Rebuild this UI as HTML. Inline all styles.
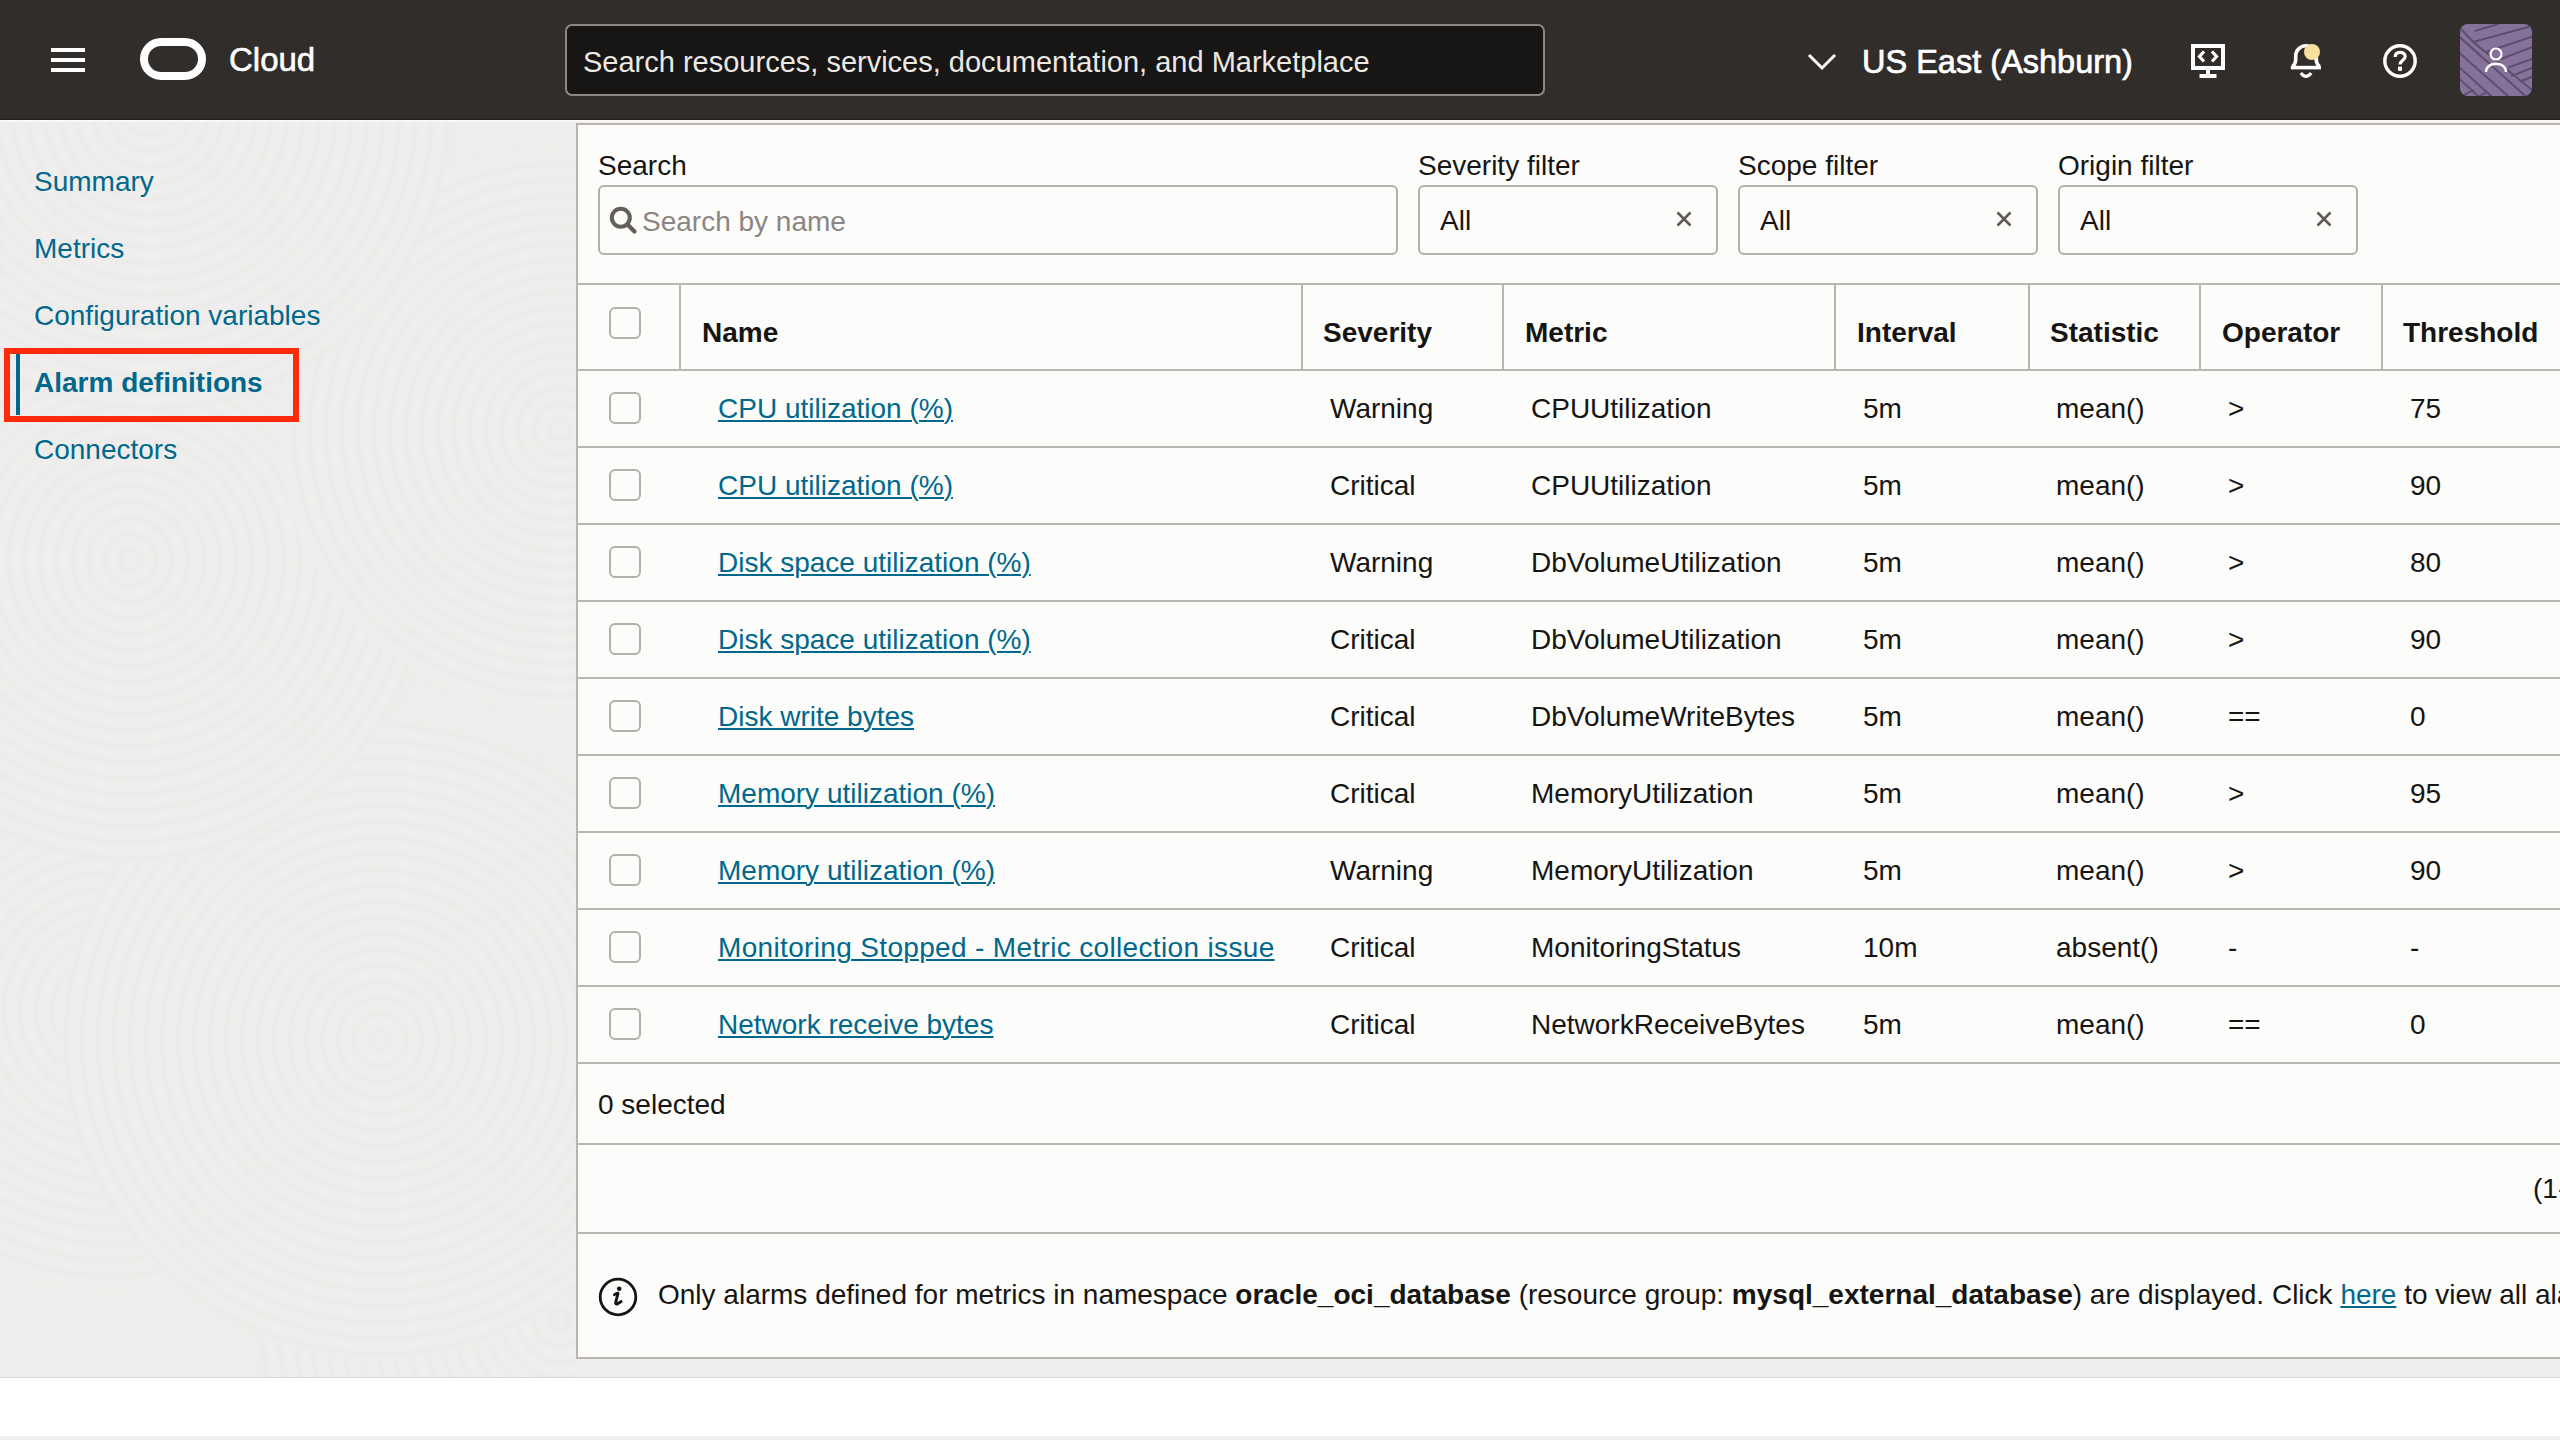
<!DOCTYPE html>
<html><head><meta charset="utf-8">
<style>
*{margin:0;padding:0;box-sizing:border-box}
html,body{width:2560px;height:1440px;overflow:hidden;background:#fff;font-family:"Liberation Sans",sans-serif;}
.a{position:absolute;white-space:nowrap;line-height:1}
#hdr{position:absolute;left:0;top:0;width:2560px;height:120px;background:#312D2A;border-bottom:1px solid #221E1B}
#wl{position:absolute;left:0;top:120px;width:2560px;height:2px;background:#F9F8F7}
#side{position:absolute;left:0;top:122px;width:2560px;height:1255px;background:#EEEDEB}
#sideline{position:absolute;left:0;top:1377px;width:2560px;height:1px;background:#D6D3CF}
#botstrip{position:absolute;left:0;top:1436px;width:2560px;height:4px;background:#F1F0EE}
.nav{font-size:28px;color:#00688C}
#panel{position:absolute;left:576px;top:123px;width:2000px;height:1236px;background:#FCFCFA;border:2px solid #B9B4AF}
.lbl{font-size:28px;color:#161513}
.inp{position:absolute;border:2px solid #B5AFAA;border-radius:6px;background:#FCFCFA}
.hl{position:absolute;left:578px;width:1990px;height:2px;background:#BAB5B0}
.vl{position:absolute;top:285px;width:2px;height:84px;background:#BAB5B0}
.cb{position:absolute;left:609px;width:32px;height:32px;border:2px solid #B5AFAA;border-radius:6px;background:#FCFCFA}
.th{font-size:28px;font-weight:bold;color:#161513}
.td{font-size:28px;color:#161513}
.lk{font-size:28px;color:#00688C;text-decoration:underline;text-decoration-thickness:2px;text-underline-offset:2px}
</style></head><body>
<div id="hdr"></div>
<div id="wl"></div>
<div id="side"></div>
<div id="sideline"></div>
<div id="botstrip"></div>
<svg class="a" style="left:0;top:122px" width="576" height="1255" viewBox="0 122 576 1255"><defs><filter id="bl" x="-5%" y="-5%" width="110%" height="110%"><feGaussianBlur stdDeviation="1.6"/></filter></defs><g filter="url(#bl)"><circle cx="560" cy="1320" r="300" fill="#EFEEEC"/><g fill="none" stroke="#ECEBE9" stroke-width="6"><circle cx="560" cy="1320" r="10"/><circle cx="560" cy="1320" r="26"/><circle cx="560" cy="1320" r="42"/><circle cx="560" cy="1320" r="58"/><circle cx="560" cy="1320" r="74"/><circle cx="560" cy="1320" r="90"/><circle cx="560" cy="1320" r="106"/><circle cx="560" cy="1320" r="122"/><circle cx="560" cy="1320" r="138"/><circle cx="560" cy="1320" r="154"/><circle cx="560" cy="1320" r="170"/><circle cx="560" cy="1320" r="186"/><circle cx="560" cy="1320" r="202"/><circle cx="560" cy="1320" r="218"/><circle cx="560" cy="1320" r="234"/><circle cx="560" cy="1320" r="250"/><circle cx="560" cy="1320" r="266"/><circle cx="560" cy="1320" r="282"/><circle cx="560" cy="1320" r="298"/></g><circle cx="110" cy="1010" r="280" fill="#EFEEEC"/><g fill="none" stroke="#ECEBE9" stroke-width="6"><circle cx="110" cy="1010" r="10"/><circle cx="110" cy="1010" r="26"/><circle cx="110" cy="1010" r="42"/><circle cx="110" cy="1010" r="58"/><circle cx="110" cy="1010" r="74"/><circle cx="110" cy="1010" r="90"/><circle cx="110" cy="1010" r="106"/><circle cx="110" cy="1010" r="122"/><circle cx="110" cy="1010" r="138"/><circle cx="110" cy="1010" r="154"/><circle cx="110" cy="1010" r="170"/><circle cx="110" cy="1010" r="186"/><circle cx="110" cy="1010" r="202"/><circle cx="110" cy="1010" r="218"/><circle cx="110" cy="1010" r="234"/><circle cx="110" cy="1010" r="250"/><circle cx="110" cy="1010" r="266"/></g><circle cx="380" cy="1040" r="320" fill="#EFEEEC"/><g fill="none" stroke="#ECEBE9" stroke-width="6"><circle cx="380" cy="1040" r="10"/><circle cx="380" cy="1040" r="26"/><circle cx="380" cy="1040" r="42"/><circle cx="380" cy="1040" r="58"/><circle cx="380" cy="1040" r="74"/><circle cx="380" cy="1040" r="90"/><circle cx="380" cy="1040" r="106"/><circle cx="380" cy="1040" r="122"/><circle cx="380" cy="1040" r="138"/><circle cx="380" cy="1040" r="154"/><circle cx="380" cy="1040" r="170"/><circle cx="380" cy="1040" r="186"/><circle cx="380" cy="1040" r="202"/><circle cx="380" cy="1040" r="218"/><circle cx="380" cy="1040" r="234"/><circle cx="380" cy="1040" r="250"/><circle cx="380" cy="1040" r="266"/><circle cx="380" cy="1040" r="282"/><circle cx="380" cy="1040" r="298"/><circle cx="380" cy="1040" r="314"/></g><circle cx="130" cy="560" r="300" fill="#EFEEEC"/><g fill="none" stroke="#ECEBE9" stroke-width="6"><circle cx="130" cy="560" r="10"/><circle cx="130" cy="560" r="26"/><circle cx="130" cy="560" r="42"/><circle cx="130" cy="560" r="58"/><circle cx="130" cy="560" r="74"/><circle cx="130" cy="560" r="90"/><circle cx="130" cy="560" r="106"/><circle cx="130" cy="560" r="122"/><circle cx="130" cy="560" r="138"/><circle cx="130" cy="560" r="154"/><circle cx="130" cy="560" r="170"/><circle cx="130" cy="560" r="186"/><circle cx="130" cy="560" r="202"/><circle cx="130" cy="560" r="218"/><circle cx="130" cy="560" r="234"/><circle cx="130" cy="560" r="250"/><circle cx="130" cy="560" r="266"/><circle cx="130" cy="560" r="282"/><circle cx="130" cy="560" r="298"/></g><circle cx="560" cy="430" r="280" fill="#EFEEEC"/><g fill="none" stroke="#ECEBE9" stroke-width="6"><circle cx="560" cy="430" r="10"/><circle cx="560" cy="430" r="26"/><circle cx="560" cy="430" r="42"/><circle cx="560" cy="430" r="58"/><circle cx="560" cy="430" r="74"/><circle cx="560" cy="430" r="90"/><circle cx="560" cy="430" r="106"/><circle cx="560" cy="430" r="122"/><circle cx="560" cy="430" r="138"/><circle cx="560" cy="430" r="154"/><circle cx="560" cy="430" r="170"/><circle cx="560" cy="430" r="186"/><circle cx="560" cy="430" r="202"/><circle cx="560" cy="430" r="218"/><circle cx="560" cy="430" r="234"/><circle cx="560" cy="430" r="250"/><circle cx="560" cy="430" r="266"/></g><circle cx="150" cy="110" r="300" fill="#EFEEEC"/><g fill="none" stroke="#ECEBE9" stroke-width="6"><circle cx="150" cy="110" r="10"/><circle cx="150" cy="110" r="26"/><circle cx="150" cy="110" r="42"/><circle cx="150" cy="110" r="58"/><circle cx="150" cy="110" r="74"/><circle cx="150" cy="110" r="90"/><circle cx="150" cy="110" r="106"/><circle cx="150" cy="110" r="122"/><circle cx="150" cy="110" r="138"/><circle cx="150" cy="110" r="154"/><circle cx="150" cy="110" r="170"/><circle cx="150" cy="110" r="186"/><circle cx="150" cy="110" r="202"/><circle cx="150" cy="110" r="218"/><circle cx="150" cy="110" r="234"/><circle cx="150" cy="110" r="250"/><circle cx="150" cy="110" r="266"/><circle cx="150" cy="110" r="282"/><circle cx="150" cy="110" r="298"/></g></g></svg>

<!-- header -->
<div class="a" style="left:51px;top:48px;width:34px;height:4px;background:#fff"></div>
<div class="a" style="left:51px;top:58px;width:34px;height:4px;background:#fff"></div>
<div class="a" style="left:51px;top:68px;width:34px;height:4px;background:#fff"></div>
<div class="a" style="left:140px;top:38px;width:66px;height:42px;border:8px solid #fff;border-radius:21px"></div>
<div class="a" style="left:229px;top:43px;font-size:33px;color:#fff;-webkit-text-stroke:0.6px #fff">Cloud</div>
<div class="a" style="left:565px;top:24px;width:980px;height:72px;background:#171614;border:2px solid #8C8884;border-radius:7px"></div>
<div class="a" style="left:583px;top:47.5px;font-size:29px;color:#ECE9E4">Search resources, services, documentation, and Marketplace</div>
<svg class="a" style="left:1806px;top:52px" width="32" height="20" viewBox="0 0 32 20"><polyline points="3,3 16,16 29,3" fill="none" stroke="#fff" stroke-width="3"/></svg>
<div class="a" style="left:1862px;top:46px;font-size:32.5px;color:#fff;-webkit-text-stroke:0.7px #fff">US East (Ashburn)</div>
<!-- dev tools icon -->
<svg class="a" style="left:2190px;top:43px" width="38" height="36" viewBox="0 0 38 36">
 <rect x="3" y="3" width="30" height="22" fill="none" stroke="#fff" stroke-width="4"/>
 <path d="M14 8.5L9.5 13.5L14 18.5M22 8.5L26.5 13.5L22 18.5" fill="none" stroke="#fff" stroke-width="3.2"/>
 <rect x="16" y="26" width="4" height="5" fill="#fff"/>
 <rect x="9.5" y="31" width="17" height="4" fill="#fff"/>
</svg>
<!-- bell -->
<svg class="a" style="left:2288px;top:40px" width="40" height="40" viewBox="0 0 40 40">
 <path d="M4.6 26.4 C7.7 23.5 7.7 22 7.7 20 L7.7 16 A10.3 10.3 0 0 1 28.3 16 L28.3 20 C28.3 22 28.3 23.5 31.4 26.4" fill="none" stroke="#fff" stroke-width="3.6"/><rect x="2.8" y="25.8" width="30.2" height="3.6" fill="#fff"/>
 <path d="M12.8 33 Q18 39.6 23.2 33" fill="none" stroke="#fff" stroke-width="3.2"/>
 <circle cx="24" cy="12" r="8" fill="#F7E09E"/>
</svg>
<!-- help -->
<svg class="a" style="left:2381px;top:42px" width="38" height="38" viewBox="0 0 38 38">
 <circle cx="19" cy="19" r="15.2" fill="none" stroke="#fff" stroke-width="3.4"/>
 <path d="M14.2 15 C14.2 11.6 16.4 10.4 19.2 10.4 C22 10.4 24.2 12 24.2 14.6 C24.2 18 19 18.4 19 22.5" fill="none" stroke="#fff" stroke-width="3.2"/>
 <rect x="17" y="24.6" width="4" height="4.2" fill="#fff"/>
</svg>
<!-- avatar -->
<svg class="a" style="left:2460px;top:24px" width="72" height="72" viewBox="0 0 72 72">
 <defs><clipPath id="avc"><rect x="0" y="0" width="72" height="72" rx="8"/></clipPath></defs>
 <g clip-path="url(#avc)">
  <rect x="0" y="0" width="72" height="72" fill="#86719B"/>
  <g stroke="#5E4E6E" stroke-width="2" fill="none" stroke-linecap="round">
   <path d="M0 4 L13.2 18 L72 66 M0 13.3 L72 78 M0 29.4 L48 72 M0 43.9 L31 72 M0 55.5 L18 72"/>
   <path d="M15.4 6.9 L38.2 0 M13.2 18 L72 2 M27.1 27.8 L72 12.8 M41 35 L72 23.3 M48.8 43.3 L72 35 M52.1 51.7 L72 43.9 M61 57.2 L72 52.8 M4 71 L13 66 M20 72 L25 69"/>
  </g>
  <circle cx="36" cy="30" r="5.5" fill="none" stroke="#fff" stroke-width="2.2"/>
  <path d="M26 48 C26 37 46 37 46 48" fill="none" stroke="#fff" stroke-width="2.4"/>
 </g>
</svg>

<!-- sidebar nav -->
<div class="a nav" style="left:34px;top:168px">Summary</div>
<div class="a nav" style="left:34px;top:235px">Metrics</div>
<div class="a nav" style="left:34px;top:302px">Configuration variables</div>
<div class="a" style="left:16px;top:353px;width:4px;height:62px;background:#00688C"></div>
<div class="a nav" style="left:34px;top:369px;font-weight:bold">Alarm definitions</div>
<div class="a nav" style="left:34px;top:436px">Connectors</div>
<div class="a" style="left:4px;top:348px;width:295px;height:74px;border:6px solid #FF2A0A"></div>

<!-- panel -->
<div id="panel"></div>
<div class="a lbl" style="left:598px;top:152px">Search</div>
<div class="inp" style="left:598px;top:185px;width:800px;height:70px"></div>
<svg class="a" style="left:608px;top:205px" width="32" height="32" viewBox="0 0 32 32">
 <circle cx="12.8" cy="12.8" r="9" fill="none" stroke="#645F5A" stroke-width="4"/>
 <path d="M19.5 19.5 L26.5 26.5" stroke="#645F5A" stroke-width="4.2" stroke-linecap="round"/>
</svg>
<div class="a" style="left:642px;top:208px;font-size:28px;color:#8B8681">Search by name</div>

<div class="a lbl" style="left:1418px;top:152px">Severity filter</div>
<div class="inp" style="left:1418px;top:185px;width:300px;height:70px"></div>
<div class="a td" style="left:1440px;top:207px">All</div>
<svg class="a" style="left:1676px;top:211px" width="16" height="16" viewBox="0 0 16 16"><path d="M1.5 1.5L14.5 14.5M14.5 1.5L1.5 14.5" stroke="#5F5A55" stroke-width="2.6"/></svg>
<div class="a lbl" style="left:1738px;top:152px">Scope filter</div>
<div class="inp" style="left:1738px;top:185px;width:300px;height:70px"></div>
<div class="a td" style="left:1760px;top:207px">All</div>
<svg class="a" style="left:1996px;top:211px" width="16" height="16" viewBox="0 0 16 16"><path d="M1.5 1.5L14.5 14.5M14.5 1.5L1.5 14.5" stroke="#5F5A55" stroke-width="2.6"/></svg>
<div class="a lbl" style="left:2058px;top:152px">Origin filter</div>
<div class="inp" style="left:2058px;top:185px;width:300px;height:70px"></div>
<div class="a td" style="left:2080px;top:207px">All</div>
<svg class="a" style="left:2316px;top:211px" width="16" height="16" viewBox="0 0 16 16"><path d="M1.5 1.5L14.5 14.5M14.5 1.5L1.5 14.5" stroke="#5F5A55" stroke-width="2.6"/></svg>

<!-- table -->
<div class="hl" style="top:283px"></div>
<div class="hl" style="top:369px"></div>
<div class="vl" style="left:679px"></div>
<div class="vl" style="left:1301px"></div>
<div class="vl" style="left:1502px"></div>
<div class="vl" style="left:1834px"></div>
<div class="vl" style="left:2028px"></div>
<div class="vl" style="left:2199px"></div>
<div class="vl" style="left:2381px"></div>

<div class="cb" style="top:307px"></div>
<div class="a th" style="left:702px;top:319px">Name</div>
<div class="a th" style="left:1323px;top:319px">Severity</div>
<div class="a th" style="left:1525px;top:319px">Metric</div>
<div class="a th" style="left:1857px;top:319px">Interval</div>
<div class="a th" style="left:2050px;top:319px">Statistic</div>
<div class="a th" style="left:2222px;top:319px">Operator</div>
<div class="a th" style="left:2403px;top:319px">Threshold</div>

<div class="cb" style="top:392px"></div>
<div class="a lk" style="left:718px;top:395px">CPU utilization (%)</div>
<div class="a td" style="left:1330px;top:395px">Warning</div>
<div class="a td" style="left:1531px;top:395px">CPUUtilization</div>
<div class="a td" style="left:1863px;top:395px">5m</div>
<div class="a td" style="left:2056px;top:395px">mean()</div>
<div class="a td" style="left:2228px;top:395px">&gt;</div>
<div class="a td" style="left:2410px;top:395px">75</div>
<div class="hl" style="top:446px"></div>
<div class="cb" style="top:469px"></div>
<div class="a lk" style="left:718px;top:472px">CPU utilization (%)</div>
<div class="a td" style="left:1330px;top:472px">Critical</div>
<div class="a td" style="left:1531px;top:472px">CPUUtilization</div>
<div class="a td" style="left:1863px;top:472px">5m</div>
<div class="a td" style="left:2056px;top:472px">mean()</div>
<div class="a td" style="left:2228px;top:472px">&gt;</div>
<div class="a td" style="left:2410px;top:472px">90</div>
<div class="hl" style="top:523px"></div>
<div class="cb" style="top:546px"></div>
<div class="a lk" style="left:718px;top:549px">Disk space utilization (%)</div>
<div class="a td" style="left:1330px;top:549px">Warning</div>
<div class="a td" style="left:1531px;top:549px">DbVolumeUtilization</div>
<div class="a td" style="left:1863px;top:549px">5m</div>
<div class="a td" style="left:2056px;top:549px">mean()</div>
<div class="a td" style="left:2228px;top:549px">&gt;</div>
<div class="a td" style="left:2410px;top:549px">80</div>
<div class="hl" style="top:600px"></div>
<div class="cb" style="top:623px"></div>
<div class="a lk" style="left:718px;top:626px">Disk space utilization (%)</div>
<div class="a td" style="left:1330px;top:626px">Critical</div>
<div class="a td" style="left:1531px;top:626px">DbVolumeUtilization</div>
<div class="a td" style="left:1863px;top:626px">5m</div>
<div class="a td" style="left:2056px;top:626px">mean()</div>
<div class="a td" style="left:2228px;top:626px">&gt;</div>
<div class="a td" style="left:2410px;top:626px">90</div>
<div class="hl" style="top:677px"></div>
<div class="cb" style="top:700px"></div>
<div class="a lk" style="left:718px;top:703px">Disk write bytes</div>
<div class="a td" style="left:1330px;top:703px">Critical</div>
<div class="a td" style="left:1531px;top:703px">DbVolumeWriteBytes</div>
<div class="a td" style="left:1863px;top:703px">5m</div>
<div class="a td" style="left:2056px;top:703px">mean()</div>
<div class="a td" style="left:2228px;top:703px">==</div>
<div class="a td" style="left:2410px;top:703px">0</div>
<div class="hl" style="top:754px"></div>
<div class="cb" style="top:777px"></div>
<div class="a lk" style="left:718px;top:780px">Memory utilization (%)</div>
<div class="a td" style="left:1330px;top:780px">Critical</div>
<div class="a td" style="left:1531px;top:780px">MemoryUtilization</div>
<div class="a td" style="left:1863px;top:780px">5m</div>
<div class="a td" style="left:2056px;top:780px">mean()</div>
<div class="a td" style="left:2228px;top:780px">&gt;</div>
<div class="a td" style="left:2410px;top:780px">95</div>
<div class="hl" style="top:831px"></div>
<div class="cb" style="top:854px"></div>
<div class="a lk" style="left:718px;top:857px">Memory utilization (%)</div>
<div class="a td" style="left:1330px;top:857px">Warning</div>
<div class="a td" style="left:1531px;top:857px">MemoryUtilization</div>
<div class="a td" style="left:1863px;top:857px">5m</div>
<div class="a td" style="left:2056px;top:857px">mean()</div>
<div class="a td" style="left:2228px;top:857px">&gt;</div>
<div class="a td" style="left:2410px;top:857px">90</div>
<div class="hl" style="top:908px"></div>
<div class="cb" style="top:931px"></div>
<div class="a lk" style="left:718px;top:934px;letter-spacing:0.34px">Monitoring Stopped - Metric collection issue</div>
<div class="a td" style="left:1330px;top:934px">Critical</div>
<div class="a td" style="left:1531px;top:934px">MonitoringStatus</div>
<div class="a td" style="left:1863px;top:934px">10m</div>
<div class="a td" style="left:2056px;top:934px">absent()</div>
<div class="a td" style="left:2228px;top:934px">-</div>
<div class="a td" style="left:2410px;top:934px">-</div>
<div class="hl" style="top:985px"></div>
<div class="cb" style="top:1008px"></div>
<div class="a lk" style="left:718px;top:1011px">Network receive bytes</div>
<div class="a td" style="left:1330px;top:1011px">Critical</div>
<div class="a td" style="left:1531px;top:1011px">NetworkReceiveBytes</div>
<div class="a td" style="left:1863px;top:1011px">5m</div>
<div class="a td" style="left:2056px;top:1011px">mean()</div>
<div class="a td" style="left:2228px;top:1011px">==</div>
<div class="a td" style="left:2410px;top:1011px">0</div>
<div class="hl" style="top:1062px"></div>

<div class="hl" style="top:1143px"></div>
<div class="hl" style="top:1232px"></div>
<div class="a td" style="left:598px;top:1091px">0 selected</div>
<div class="a td" style="left:2533px;top:1175px">(1-10 of 10 items)</div>

<svg class="a" style="left:597px;top:1276px" width="42" height="42" viewBox="0 0 42 42">
 <circle cx="21" cy="21" r="17.8" fill="none" stroke="#161513" stroke-width="2.8"/>
 <circle cx="22.2" cy="12.8" r="2.3" fill="#161513"/>
 <path d="M17.4 18.6 Q19.4 17.3 21 17.3 L18.7 26.4 Q18.2 28.8 20.6 27.8 L24.2 25.6" fill="none" stroke="#161513" stroke-width="2.9" stroke-linejoin="round" stroke-linecap="round"/>
</svg>
<div class="a" style="left:658px;top:1281px;font-size:28px;color:#161513">Only alarms defined for metrics in namespace <b>oracle_oci_database</b> (resource group: <b>mysql_external_database</b>) are displayed. Click <span style="color:#00688C;text-decoration:underline;text-decoration-thickness:2px;text-underline-offset:2px">here</span> to view all alarms</div>

</body></html>
